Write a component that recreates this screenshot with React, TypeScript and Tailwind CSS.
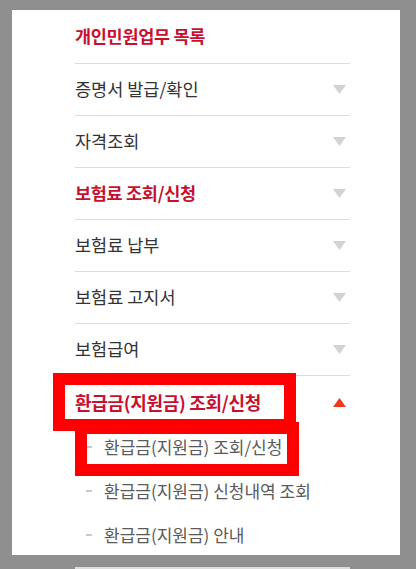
const font = { fontFamily: '"Noto Sans CJK KR", "Noto Sans", sans-serif' }

type Item = { label: string; strong?: boolean }

const items: Item[] = [
  { label: '증명서 발급/확인' },
  { label: '자격조회' },
  { label: '보험료 조회/신청', strong: true },
  { label: '보험료 납부' },
  { label: '보험료 고지서' },
  { label: '보험급여' },
]

const subItems = ['환급금(지원금) 조회/신청', '환급금(지원금) 신청내역 조회', '환급금(지원금) 안내']

function Arrow({ up = false }: { up?: boolean }) {
  return (
    <svg width="13" height="9" viewBox="0 0 13 9" className="mr-[4px] shrink-0">
      {up ? (
        <polygon points="6.5,0 13,9 0,9" fill="#f0381f" />
      ) : (
        <polygon points="0,0 13,0 6.5,9" fill="#d2d2d2" />
      )}
    </svg>
  )
}

export default function App() {
  return (
    <div className="w-[416px] h-[569px] overflow-hidden bg-[#8f8f8f] pt-[10px] pl-[12px]" style={font}>
      <div className="relative w-[388px] h-[545px] bg-white pl-[63px]">
        <ul className="w-[275px]">
          {/* Title */}
          <li className="h-[53px] flex items-center">
            <span className="text-[17.5px] font-bold text-[#c8102e] tracking-[-0.3px]">개인민원업무 목록</span>
          </li>

          {items.map((item) => (
            <li key={item.label} className="h-[52px] border-t border-[#dcdcdc] flex items-center justify-between">
              <span className={`text-[17.5px] ${item.strong ? 'font-bold text-[#c8102e] tracking-[-0.3px]' : 'text-[#333333]'}`}>
                {item.label}
              </span>
              <Arrow />
            </li>
          ))}

          {/* Active group */}
          <li className="border-t border-[#dcdcdc]">
            <div className="h-[49px] flex items-center justify-between pt-[4px]">
              <span className="text-[18px] font-bold text-[#c8102e] tracking-[-0.3px]">환급금(지원금) 조회/신청</span>
              <Arrow up />
            </div>
            <ul>
              {subItems.map((sub) => (
                <li key={sub} className="h-[44px] flex items-center">
                  <span className="w-[6px] h-[2px] bg-[#c8c8c8] ml-[11px] mr-[12px]" />
                  <span className="text-[17px] text-[#5a5a5a]">{sub}</span>
                </li>
              ))}
            </ul>
          </li>
        </ul>

        {/* Highlight boxes */}
        <div className="absolute left-[41px] top-[363px] w-[243px] h-[58px] border-[12px] border-[#ff0000]" />
        <div className="absolute left-[63px] top-[412px] w-[224px] h-[54px] border-[12px] border-[#ff0000]" />
      </div>
      <div className="mt-[12px] ml-[63px] w-[275px] h-[2px] bg-[#dcdcdc]" />
    </div>
  )
}
